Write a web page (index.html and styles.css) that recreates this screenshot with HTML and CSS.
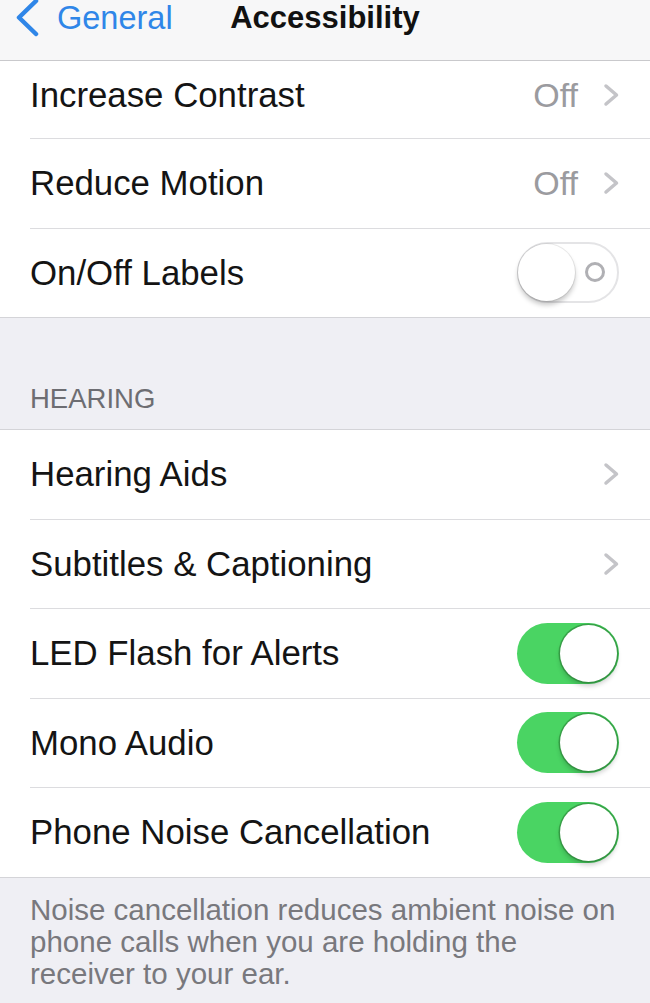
FILE: index.html
```html
<!DOCTYPE html>
<html lang="en">
<head>
    <meta charset="UTF-8">
    <meta name="viewport" content="width=device-width, initial-scale=1.0">
    <title>Accessibility</title>
    <link rel="stylesheet" href="styles.css">
</head>
<body>
    <div class="screen">
        <header class="navbar">
            <a class="back" href="#">
                <svg class="back-icon" width="26" height="38" viewBox="0 0 26 38">
                    <path d="M22 2 L5 18.5 L22 35" fill="none" stroke="currentColor" stroke-width="4.5" stroke-linecap="round" stroke-linejoin="round"/>
                </svg>
                <span>General</span>
            </a>
            <h1 class="title">Accessibility</h1>
            <div></div>
        </header>

        <ul class="group">
            <li class="cell cell-clipped">
                <div class="cell-body">
                    <span class="label">Increase Contrast</span>
                    <span class="detail">Off</span>
                    <svg class="chevron" width="16" height="24" viewBox="0 0 16 24"><path d="M3 3 L13.5 12 L3 21" /></svg>
                </div>
            </li>
            <li class="cell">
                <div class="cell-body">
                    <span class="label">Reduce Motion</span>
                    <span class="detail">Off</span>
                    <svg class="chevron" width="16" height="24" viewBox="0 0 16 24"><path d="M3 3 L13.5 12 L3 21" /></svg>
                </div>
            </li>
            <li class="cell">
                <div class="cell-body">
                    <span class="label">On/Off Labels</span>
                    <span class="toggle toggle-off"><span class="toggle-mark"></span><span class="knob"></span></span>
                </div>
            </li>
        </ul>

        <div class="section-header">HEARING</div>

        <ul class="group">
            <li class="cell">
                <div class="cell-body">
                    <span class="label">Hearing Aids</span>
                    <svg class="chevron" width="16" height="24" viewBox="0 0 16 24"><path d="M3 3 L13.5 12 L3 21" /></svg>
                </div>
            </li>
            <li class="cell">
                <div class="cell-body">
                    <span class="label">Subtitles &amp; Captioning</span>
                    <svg class="chevron" width="16" height="24" viewBox="0 0 16 24"><path d="M3 3 L13.5 12 L3 21" /></svg>
                </div>
            </li>
            <li class="cell">
                <div class="cell-body">
                    <span class="label">LED Flash for Alerts</span>
                    <span class="toggle toggle-on"><span class="knob"></span></span>
                </div>
            </li>
            <li class="cell">
                <div class="cell-body">
                    <span class="label">Mono Audio</span>
                    <span class="toggle toggle-on"><span class="knob"></span></span>
                </div>
            </li>
            <li class="cell">
                <div class="cell-body">
                    <span class="label">Phone Noise Cancellation</span>
                    <span class="toggle toggle-on"><span class="knob"></span></span>
                </div>
            </li>
        </ul>

        <p class="section-footer">Noise cancellation reduces ambient noise on phone calls when you are holding the receiver to your ear.</p>
    </div>
</body>
</html>
```

FILE: styles.css
```css
body {
    margin: 0;
    background-color: #efeff4;
    font-family: "Liberation Sans", Arial, sans-serif;
}
.screen {
    width: 650px;
    height: 1003px;
    overflow: hidden;
    background-color: #efeff4;
}
.navbar {
    display: grid;
    grid-template-columns: 1fr auto 1fr;
    height: 60px;
    background-color: #f7f7f8;
    border-bottom: 1px solid #c9c9cc;
}
.back {
    display: flex;
    align-items: flex-start;
    padding-left: 14px;
    color: #2f86e8;
    font-size: 32.5px;
    line-height: 36px;
    text-decoration: none;
}
.back-icon {
    margin-right: 17px;
    margin-top: -1px;
}
.title {
    margin: 0;
    font-size: 31px;
    line-height: 36px;
    font-weight: bold;
    color: #111;
}
.group {
    list-style: none;
    margin: 0;
    padding: 0;
    background: white;
    border-bottom: 1px solid #d4d4d8;
}
.section-header + .group {
    border-top: 1px solid #d4d4d8;
}
.cell {
    padding-left: 30px;
}
.cell-body {
    display: flex;
    align-items: center;
    box-sizing: border-box;
    height: 89.5px;
    padding-right: 31px;
    border-bottom: 1px solid #dcdcdf;
}
.cell:last-child .cell-body {
    height: 88.5px;
    border-bottom: none;
}
.cell-clipped .cell-body {
    height: 78px;
    padding-bottom: 9px;
}
.label {
    flex: 1;
    font-size: 34.8px;
    color: #141414;
}
.detail {
    font-size: 34px;
    color: #9b9b9f;
    margin-right: 25px;
}
.chevron {
    fill: none;
    stroke: #c4c4c8;
    stroke-width: 3.5;
    stroke-linecap: round;
    stroke-linejoin: round;
}
.toggle {
    position: relative;
    box-sizing: border-box;
    width: 102px;
    height: 61px;
    border-radius: 31px;
}
.toggle-off {
    background: white;
    border: 2px solid #e4e4e6;
}
.toggle-on {
    background-color: #4ad463;
}
.knob {
    position: absolute;
    top: 2px;
    width: 57px;
    height: 57px;
    border-radius: 50%;
    background: white;
    box-shadow: 0 0 0 1px rgba(0, 0, 0, 0.08), 0 4px 5px rgba(0, 0, 0, 0.22);
}
.toggle-off .knob {
    top: 0;
    left: -1px;
}
.toggle-on .knob {
    right: 2px;
    box-shadow: 0 0 0 1.5px rgba(40, 120, 50, 0.55), 0 4px 5px rgba(0, 0, 0, 0.2);
}
.toggle-mark {
    position: absolute;
    top: 18px;
    right: 12px;
    box-sizing: border-box;
    width: 20px;
    height: 20px;
    border: 3px solid #b0b0b4;
    border-radius: 50%;
}
.section-header {
    box-sizing: border-box;
    height: 111px;
    padding: 0 30px 15px;
    display: flex;
    align-items: flex-end;
    font-size: 27.5px;
    line-height: 30px;
    color: #6d6d72;
}
.section-footer {
    margin: 0;
    padding: 16px 30px 0;
    font-size: 29.5px;
    line-height: 32px;
    color: #78787d;
}
```
